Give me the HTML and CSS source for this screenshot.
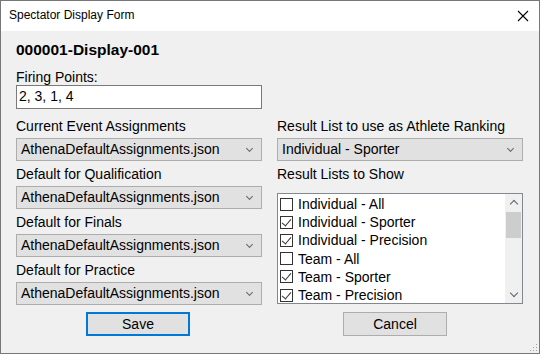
FILE: index.html
```html
<!DOCTYPE html>
<html lang="en">
<head>
    <meta charset="UTF-8">
    <title>Spectator Display Form</title>
    <link rel="stylesheet" href="styles.css">
</head>
<body>
    <div class="window">
        <div class="titlebar">
            <span class="title">Spectator Display Form</span>
            <svg class="close" width="12" height="12" viewBox="0 0 12 12">
                <path d="M1 1 L11 11 M11 1 L1 11" stroke="#000" stroke-width="1.1" fill="none"/>
            </svg>
        </div>

        <div class="form">
            <h1 class="display-name">000001-Display-001</h1>
            <div class="field-label firing">Firing Points:</div>
            <div class="textbox">2, 3, 1, 4</div>

            <div class="columns">
                <div class="col">
                    <div class="field">
                        <div class="field-label">Current Event Assignments</div>
                        <div class="combo"><span>AthenaDefaultAssignments.json</span><i class="chev"></i></div>
                    </div>
                    <div class="field">
                        <div class="field-label">Default for Qualification</div>
                        <div class="combo"><span>AthenaDefaultAssignments.json</span><i class="chev"></i></div>
                    </div>
                    <div class="field">
                        <div class="field-label">Default for Finals</div>
                        <div class="combo"><span>AthenaDefaultAssignments.json</span><i class="chev"></i></div>
                    </div>
                    <div class="field">
                        <div class="field-label">Default for Practice</div>
                        <div class="combo"><span>AthenaDefaultAssignments.json</span><i class="chev"></i></div>
                    </div>
                </div>

                <div class="col">
                    <div class="field">
                        <div class="field-label">Result List to use as Athlete Ranking</div>
                        <div class="combo"><span>Individual - Sporter</span><i class="chev"></i></div>
                    </div>
                    <div class="field">
                        <div class="field-label">Result Lists to Show</div>
                        <div class="listbox">
                            <ul class="items">
                                <li><span class="check"></span>Individual - All</li>
                                <li><span class="check on"></span>Individual - Sporter</li>
                                <li><span class="check on"></span>Individual - Precision</li>
                                <li><span class="check"></span>Team - All</li>
                                <li><span class="check on"></span>Team - Sporter</li>
                                <li><span class="check on"></span>Team - Precision</li>
                            </ul>
                            <div class="scrollbar">
                                <div class="arrow up"></div>
                                <div class="track"><div class="thumb"></div></div>
                                <div class="arrow down"></div>
                            </div>
                        </div>
                    </div>
                </div>
            </div>

            <div class="buttons">
                <div class="cell"><button class="btn save">Save</button></div>
                <div class="cell"><button class="btn cancel">Cancel</button></div>
            </div>
        </div>

        <svg class="grip" width="10" height="10" viewBox="0 0 10 10">
            <rect x="8" y="2" width="1" height="1" fill="#a0a0a0"/>
            <rect x="5" y="5" width="1" height="1" fill="#a0a0a0"/>
            <rect x="8" y="5" width="1" height="1" fill="#a0a0a0"/>
            <rect x="2" y="8" width="1" height="1" fill="#a0a0a0"/>
            <rect x="5" y="8" width="1" height="1" fill="#a0a0a0"/>
            <rect x="8" y="8" width="1" height="1" fill="#a0a0a0"/>
        </svg>
    </div>
</body>
</html>
```

FILE: styles.css
```css
* {
    margin: 0;
    padding: 0;
    box-sizing: border-box;
}

body {
    font-family: "Liberation Sans", Arial, sans-serif;
    font-size: 14px;
    color: #000;
    background: #fff;
}

.window {
    position: relative;
    width: 540px;
    height: 354px;
    border: 1px solid #777;
    background: #f0f0f0;
}

.titlebar {
    height: 30px;
    background: #fff;
    display: flex;
    align-items: center;
    justify-content: space-between;
    padding: 0 10px 0 8px;
}

.title {
    font-size: 12px;
    padding-bottom: 2px;
}

.close {
    margin-bottom: 1px;
}

.form {
    padding: 10px 15px 0 15px;
}

.display-name {
    font-size: 15.5px;
    font-weight: bold;
    line-height: 18px;
    height: 18px;
}

.field-label {
    line-height: 17px;
    height: 17px;
    white-space: nowrap;
}

.field-label.firing {
    margin-top: 10px;
    line-height: 16px;
    height: 16px;
}

.textbox {
    width: 246px;
    height: 24px;
    background: #fff;
    border: 1px solid #7a7a7a;
    padding-left: 2px;
    line-height: 20px;
}

.columns {
    display: grid;
    grid-template-columns: 246px 246px;
    column-gap: 15px;
    margin-top: 9px;
}

.col {
    display: flex;
    flex-direction: column;
    gap: 5px;
}

.combo {
    margin-top: 3px;
    height: 23px;
    background: #e1e1e1;
    border: 1px solid #adadad;
    padding-left: 4px;
    line-height: 21px;
    display: flex;
    justify-content: space-between;
    align-items: center;
}

.combo span {
    white-space: nowrap;
}

.chev {
    width: 5px;
    height: 5px;
    border-right: 1px solid #666;
    border-bottom: 1px solid #666;
    transform: rotate(45deg);
    margin: 0 9px 3px 0;
}

.listbox {
    margin-top: 10px;
    height: 111px;
    background: #fff;
    border: 1px solid #828790;
    display: flex;
}

.items {
    flex: 1;
    list-style: none;
    padding: 1px 0 0 2px;
}

.items li {
    height: 18.2px;
    line-height: 18.2px;
    display: flex;
    align-items: center;
    white-space: nowrap;
}

.check {
    width: 13px;
    height: 13px;
    border: 1px solid #333;
    background: #fff;
    margin-right: 5px;
    position: relative;
}

.check.on::after {
    content: "";
    position: absolute;
    left: 3px;
    top: 0px;
    width: 4px;
    height: 8px;
    border-right: 1px solid #333;
    border-bottom: 1px solid #333;
    transform: rotate(40deg);
}

.scrollbar {
    width: 17px;
    background: #f0f0f0;
    display: flex;
    flex-direction: column;
}

.arrow {
    height: 17px;
    display: flex;
    align-items: center;
    justify-content: center;
}

.arrow::before {
    content: "";
    width: 5px;
    height: 5px;
    border-left: 1.5px solid #606060;
    border-top: 1.5px solid #606060;
}

.arrow.up::before {
    transform: rotate(45deg);
    margin-top: 3px;
}

.arrow.down::before {
    transform: rotate(225deg);
    margin-top: -3px;
}

.track {
    flex: 1;
    padding: 1px 1px 0 1px;
}

.thumb {
    height: 26px;
    background: #cdcdcd;
}

.buttons {
    display: grid;
    grid-template-columns: 246px 246px;
    column-gap: 15px;
    margin-top: 7px;
}

.btn {
    width: 104px;
    height: 24px;
    font-family: "Liberation Sans", Arial, sans-serif;
    font-size: 14px;
    color: #000;
    background: #e1e1e1;
    border: 1px solid #adadad;
}

.btn.save {
    margin-left: 70px;
    border: 2px solid #0078d7;
}

.btn.cancel {
    margin-left: 66px;
}

.grip {
    position: absolute;
    right: 1px;
    bottom: 1px;
}
```
